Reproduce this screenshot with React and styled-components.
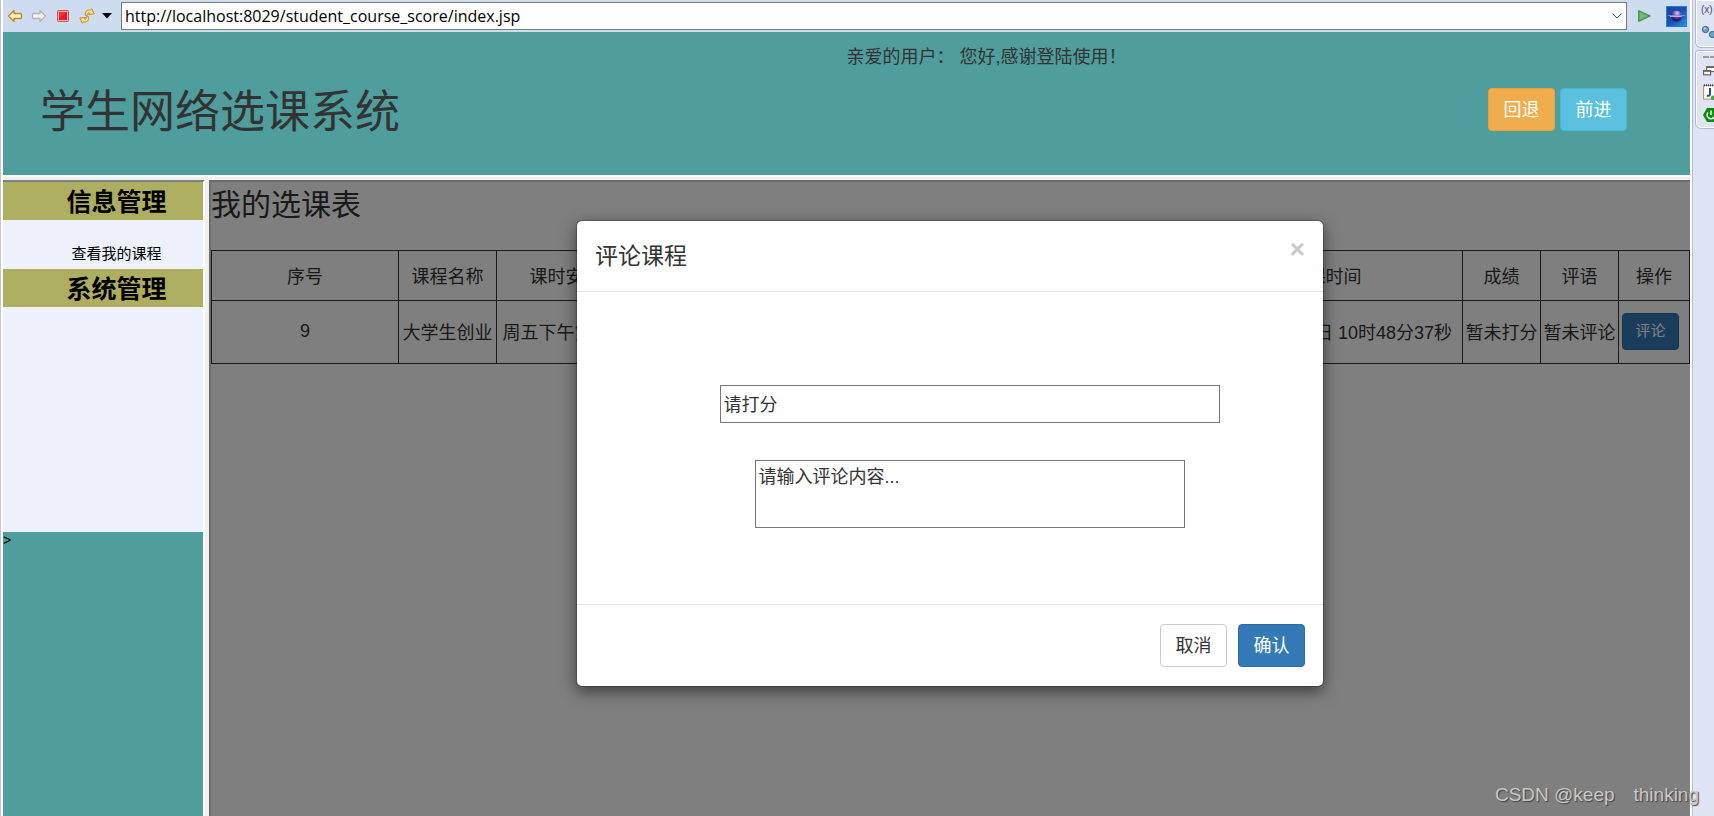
import React, { useState } from "react";
import styled, { createGlobalStyle } from "styled-components";

const columns = [
     { title: "序号", width: "187px" },
     { title: "课程名称", width: "98px" },
     { title: "课时安排", width: "138px" },
     { title: "任课教师" },
     { title: "选课时间", width: "274px" },
     { title: "成绩", width: "78px" },
     { title: "评语", width: "78px" },
     { title: "操作", width: "71px" },
];

const courses = [
     {
          id: 9,
          name: "大学生创业",
          schedule: "周五下午第三节",
          teacher: "",
          time: "2020年12月31日 10时48分37秒",
          score: "暂未打分",
          comment: "暂未评论",
     },
];

const ArrowIcon = ({ fill, stroke, flip }) => (
     <svg width="16" height="14" viewBox="0 0 16 14" aria-hidden="true">
          <path
               d={
                    flip
                         ? "M14.5 7 9 1.5V4.5H2.5Q1.5 4.5 1.5 5.5V8.5Q1.5 9.5 2.5 9.5H9V12.5Z"
                         : "M1.5 7 7 1.5V4.5H13.5Q14.5 4.5 14.5 5.5V8.5Q14.5 9.5 13.5 9.5H7V12.5Z"
               }
               fill={fill}
               stroke={stroke}
               strokeWidth="1.3"
               strokeLinejoin="round"
          />
     </svg>
);

const StopIcon = () => (
     <svg width="12" height="12" viewBox="0 0 12 12" aria-hidden="true">
          <rect x=".5" y=".5" width="11" height="11" rx="1" fill="#f3a9ab" stroke="#cf5358" />
          <rect x="2" y="2" width="8" height="8" fill="#de1f27" />
          <path d="M2 2h8l-8 6z" fill="#e5393e" />
     </svg>
);

const RefreshIcon = () => (
     <svg width="16" height="16" viewBox="0 0 16 16" aria-hidden="true">
          <g fill="#fbe08a" stroke="#c58a2c" strokeLinejoin="round">
               <path d="M6.5 7.5C5.6 4 7.8 1.2 11.4 2.2L12.8.8 15.2 6 9.6 6.4 10.6 5C9 4.4 8.4 5.4 9 7Z" />
               <path d="M9.5 8.5C10.4 12 8.2 14.8 4.6 13.8L3.2 15.2.8 10 6.4 9.6 5.4 11C7 11.6 7.6 10.6 7 9Z" />
          </g>
     </svg>
);

const CaretIcon = () => (
     <svg width="10" height="6" viewBox="0 0 10 6" aria-hidden="true">
          <path d="M0 0H10L5 5.5Z" fill="#000" />
     </svg>
);

const ChevronIcon = () => (
     <svg width="10" height="6" viewBox="0 0 10 6" aria-hidden="true">
          <path d="M.5.5 5 5 9.5.5" fill="none" stroke="#444" />
     </svg>
);

const PlayIcon = () => (
     <svg width="13" height="12" viewBox="0 0 13 12" aria-hidden="true">
          <path d="M.8.8V11.2L12 6Z" fill="#6cc06f" stroke="#2f8a45" strokeWidth="1.2" strokeLinejoin="round" />
     </svg>
);

const GlobeIcon = () => (
     <svg width="21" height="21" viewBox="0 0 21 21" aria-hidden="true">
          <defs>
               <linearGradient id="globeBack" x1="0" y1="0" x2="1" y2="1">
                    <stop offset="0" stopColor="#14469c" />
                    <stop offset=".5" stopColor="#1850b4" />
                    <stop offset="1" stopColor="#2f92e8" />
               </linearGradient>
               <radialGradient id="globeBall" cx=".55" cy=".25" r=".75">
                    <stop offset="0" stopColor="#e3c8f2" />
                    <stop offset=".35" stopColor="#8a62b8" />
                    <stop offset=".7" stopColor="#3d2278" />
                    <stop offset="1" stopColor="#1d1250" />
               </radialGradient>
          </defs>
          <rect width="21" height="21" fill="url(#globeBack)" />
          <rect x=".5" y=".5" width="20" height="20" fill="none" stroke="#2c7ad2" />
          <circle cx="10.5" cy="10" r="5.6" fill="url(#globeBall)" />
          <path d="M2 9.5h17" stroke="#7fa0e0" strokeWidth=".8" />
          <path d="M4 10.5h12" stroke="#d5c0f0" strokeWidth=".8" />
     </svg>
);

const BreakpointIcon = () => (
     <svg width="18" height="14" viewBox="0 0 18 14" aria-hidden="true">
          <g fill="#6fa3c9" stroke="#2c5d86">
               <circle cx="4.5" cy="4.5" r="3.1" />
               <circle cx="11.5" cy="9.5" r="3.1" />
          </g>
          <circle cx="3.6" cy="3.6" r="1" fill="#cfe3f2" />
     </svg>
);

const RestoreIcon = () => (
     <svg width="12" height="10" viewBox="0 0 12 10" aria-hidden="true">
          <g fill="#fff" stroke="#6a625c" strokeWidth="1.2">
               <rect x="3.6" y="1" width="8" height="4.5" />
               <rect x=".6" y="4.6" width="7" height="4.2" />
          </g>
          <path d="M3 1.2h9M0 4.8h8" stroke="#6a625c" strokeWidth="1.8" />
     </svg>
);

const JUnitIcon = () => (
     <svg width="14" height="16" viewBox="0 0 14 16" aria-hidden="true">
          <rect x=".6" y="1.6" width="12" height="13.5" fill="#fff" stroke="#b98d3c" />
          <path d="M1 1.2h12" stroke="#30415f" strokeWidth="2" strokeDasharray="1 1" />
          <path d="M7 4v6.2q0 2-3.2 1.6" fill="none" stroke="#274f8c" strokeWidth="2" />
          <path d="M8 12.5 14 10v6H8z" fill="#4da64d" />
     </svg>
);

const PowerIcon = () => (
     <svg width="16" height="14" viewBox="0 0 16 14" aria-hidden="true">
          <path d="M4 0h8l4 7-4 7H4L0 7Z" fill="#0a8a0a" />
          <path d="M5 4.5a3.8 3.8 0 1 0 6 0M8 2.5V7" fill="none" stroke="#fff" strokeWidth="1.4" />
     </svg>
);

const App = () => {
     const [url, setUrl] = useState("http://localhost:8029/student_course_score/index.jsp");
     const [score, setScore] = useState("请打分");
     const [comment, setComment] = useState("请输入评论内容...");
     //评论弹窗
     const [open, setOpen] = useState(true);

     return (
          <Window>
               <GlobalStyle />
               <Browser>
                    <Toolbar>
                         <ToolGroup>
                              <ToolButton aria-label="后退"><ArrowIcon fill="#fdf0b8" stroke="#c48a1e" /></ToolButton>
                              <ToolButton aria-label="前进"><ArrowIcon flip fill="#f1f1f1" stroke="#b4b4b8" /></ToolButton>
                              <ToolButton aria-label="停止"><StopIcon /></ToolButton>
                              <ToolButton aria-label="刷新"><RefreshIcon /></ToolButton>
                         </ToolGroup>
                         <MenuButton aria-label="更多"><CaretIcon /></MenuButton>
                         <AddressBox>
                              <input aria-label="地址" value={url} onChange={(e) => setUrl(e.target.value)} />
                              <HistoryButton aria-label="历史"><ChevronIcon /></HistoryButton>
                         </AddressBox>
                         <EndTools>
                              <ToolButton aria-label="转到"><PlayIcon /></ToolButton>
                              <ToolButton aria-label="浏览器"><GlobeIcon /></ToolButton>
                         </EndTools>
                    </Toolbar>

                    <Header>
                         <Greeting>亲爱的用户： 您好,感谢登陆使用！</Greeting>
                         <HeaderRow>
                              <h1>学生网络选课系统</h1>
                              <HeaderButtons>
                                   <Button $kind="warning">回退</Button>
                                   <Button $kind="info">前进</Button>
                              </HeaderButtons>
                         </HeaderRow>
                    </Header>

                    <Frames>
                         <Sidebar>
                              <Menu>
                                   <h2>信息管理</h2>
                                   <a href="#courses">查看我的课程</a>
                                   <h2>系统管理</h2>
                              </Menu>
                              <Stray>&gt;</Stray>
                         </Sidebar>
                         <Main>
                              <h2>我的选课表</h2>
                              <CourseTable>
                                   <colgroup>
                                        {columns.map((col) => (
                                             <Col key={col.title} $width={col.width} />
                                        ))}
                                   </colgroup>
                                   <thead>
                                        <tr>
                                             {columns.map((col) => (
                                                  <th key={col.title}>{col.title}</th>
                                             ))}
                                        </tr>
                                   </thead>
                                   <tbody>
                                        {courses.map((course) => (
                                             <tr key={course.id}>
                                                  <td>{course.id}</td>
                                                  <td>{course.name}</td>
                                                  <td>{course.schedule}</td>
                                                  <td>{course.teacher}</td>
                                                  <td>{course.time}</td>
                                                  <td>{course.score}</td>
                                                  <td>{course.comment}</td>
                                                  <ActionCell>
                                                       <Button $kind="primary" $small onClick={() => setOpen(true)}>
                                                            评论
                                                       </Button>
                                                  </ActionCell>
                                             </tr>
                                        ))}
                                   </tbody>
                              </CourseTable>

                              {open && (
                                   <Backdrop>
                                        <Modal role="dialog" aria-labelledby="modal-title">
                                             <ModalHeader>
                                                  <h4 id="modal-title">评论课程</h4>
                                                  <CloseButton aria-label="关闭" onClick={() => setOpen(false)}>×</CloseButton>
                                             </ModalHeader>
                                             <ModalBody>
                                                  <ScoreInput
                                                       aria-label="打分"
                                                       value={score}
                                                       onChange={(e) => setScore(e.target.value)}
                                                  />
                                                  <CommentInput
                                                       aria-label="评论内容"
                                                       value={comment}
                                                       onChange={(e) => setComment(e.target.value)}
                                                  />
                                             </ModalBody>
                                             <ModalFooter>
                                                  <Button $kind="default" onClick={() => setOpen(false)}>取消</Button>
                                                  <Button $kind="primary" onClick={() => setOpen(false)}>确认</Button>
                                             </ModalFooter>
                                        </Modal>
                                   </Backdrop>
                              )}
                         </Main>
                    </Frames>
               </Browser>

               <Rail>
                    <RailCard $first>
                         <span>(x)</span>
                         <BreakpointIcon />
                    </RailCard>
                    <RailCard>
                         <Grip />
                         <RestoreIcon />
                         <JUnitIcon />
                         <PowerIcon />
                    </RailCard>
               </Rail>
               <Watermark>CSDN @keep　thinking</Watermark>
          </Window>
     );
};

export default App;

const GlobalStyle = createGlobalStyle`
     * {
          box-sizing: border-box;
     }
     body {
          margin: 0;
          overflow: hidden;
          color: #333;
          font-family: "Liberation Sans", "Noto Sans CJK SC", sans-serif;
          font-size: 18px;
     }
     h1, h2, h4 {
          margin: 0;
          font-weight: 400;
     }
     button, input, textarea {
          font-family: inherit;
          color: inherit;
     }
     svg {
          display: block;
          flex: none;
     }
`;

const Window = styled.div`
     display: flex;
     height: 100vh;
     background-color: #fff;
     position: relative;
     overflow: hidden;
     border-left: 1px solid #c4c4c4;
`;

const Browser = styled.div`
     flex: 1;
     min-width: 0;
     margin: 0 2px;
     display: flex;
     flex-direction: column;
`;

const Toolbar = styled.div`
     height: 32px;
     background-color: #cddcee;
     display: flex;
     align-items: center;
`;

const ToolGroup = styled.div`
     display: flex;
`;

const ToolButton = styled.button`
     width: 24px;
     height: 24px;
     padding: 0;
     border: none;
     background: none;
     display: flex;
     align-items: center;
     justify-content: center;
`;

const MenuButton = styled(ToolButton)`
     width: 16px;
     margin-right: 6px;
`;

const HistoryButton = styled(ToolButton)`
     width: 18px;
`;

const AddressBox = styled.div`
     flex: 1;
     height: 28px;
     background-color: #fff;
     border: 1px solid #7a7a7a;
     display: flex;
     align-items: center;
     input {
          flex: 1;
          min-width: 0;
          border: none;
          outline: none;
          background: none;
          padding: 0 3px;
          color: #000;
          font-family: "Open Sans", sans-serif;
          font-size: 16px;
          line-height: 24px;
     }
`;

const EndTools = styled.div`
     display: flex;
     gap: 8px;
     padding: 0 2px 0 5px;
`;

const Header = styled.header`
     height: 143px;
     background-color: #509d9d;
     padding: 11px 63px 0 37px;
`;

const Greeting = styled.p`
     margin: 0;
     padding-left: calc(50% + 13px);
     line-height: 28px;
     white-space: nowrap;
`;

const HeaderRow = styled.div`
     display: flex;
     align-items: flex-start;
     justify-content: space-between;
     padding-top: 12px;
     h1 {
          font-size: 45px;
          line-height: 60px;
     }
`;

const HeaderButtons = styled.div`
     display: flex;
     gap: 5px;
     padding-top: 5px;
`;

const kinds = {
     default: { bg: "#fff", line: "#ccc", text: "#333" },
     primary: { bg: "#337ab7", line: "#2e6da4", text: "#fff" },
     info: { bg: "#5bc0de", line: "#46b8da", text: "#fff" },
     warning: { bg: "#f0ad4e", line: "#eea236", text: "#fff" },
};

const Button = styled.button`
     height: ${({ $small }) => ($small ? "37px" : "43px")};
     width: ${({ $small }) => ($small ? "57px" : "67px")};
     padding: 0;
     font-size: ${({ $small }) => ($small ? "15px" : "18px")};
     line-height: 24px;
     color: ${({ $kind }) => kinds[$kind].text};
     background-color: ${({ $kind }) => kinds[$kind].bg};
     border: 1px solid ${({ $kind }) => kinds[$kind].line};
     border-radius: 4px;
     cursor: pointer;
`;

const Frames = styled.div`
     flex: 1;
     min-height: 0;
     display: flex;
     gap: 4px;
     background-color: #f0f0f0;
     border-top: 2px solid #fff;
     padding-top: 3px;
`;

const Sidebar = styled.aside`
     width: 202px;
     display: flex;
     flex-direction: column;
     background-color: #509d9d;
     border-top: 2px solid #808080;
     border-right: 2px solid #fff;
`;

const Menu = styled.nav`
     height: 350px;
     background-color: #edf1fb;
     display: flex;
     flex-direction: column;
     text-align: center;
     h2 {
          background-color: #aeae60;
          color: #000;
          font-size: 25px;
          font-weight: 700;
          line-height: 36px;
          padding: 2px 0 0 27px;
     }
     a {
          color: #000;
          font-size: 15px;
          line-height: 30px;
          padding: 19px 0 0 27px;
          text-decoration: none;
     }
`;

const Stray = styled.span`
     color: #000;
     font-size: 14px;
     line-height: 16px;
`;

const Main = styled.main`
     flex: 1;
     min-width: 0;
     position: relative;
     background-color: #fff;
     border-top: 2px solid #6c6c6c;
     border-left: 2px solid #6c6c6c;
     h2 {
          font-size: 30px;
          line-height: 46px;
          margin-bottom: 22px;
     }
`;

const CourseTable = styled.table`
     width: 100%;
     table-layout: fixed;
     border-collapse: collapse;
     text-align: center;
     th, td {
          border: 1px solid #333;
          padding: 0 0 2px;
          font-weight: 400;
          white-space: nowrap;
     }
     th {
          height: 50px;
     }
     td {
          height: 63px;
     }
`;

const Col = styled.col`
     width: ${({ $width }) => $width || "auto"};
`;

const ActionCell = styled.td`
     text-align: left;
     button {
          margin-left: 3px;
     }
`;

const Backdrop = styled.div`
     position: absolute;
     inset: 0;
     background-color: rgba(0, 0, 0, 0.5);
     display: flex;
     align-items: flex-start;
     justify-content: center;
     padding: 38px 1px 0 0;
`;

const Modal = styled.div`
     width: 748px;
     background-color: #fff;
     background-clip: padding-box;
     border: 1px solid rgba(0, 0, 0, 0.2);
     border-radius: 6px;
     box-shadow: 0 5px 15px rgba(0, 0, 0, 0.5);
`;

const ModalHeader = styled.div`
     display: flex;
     align-items: flex-start;
     justify-content: space-between;
     padding: 19px 18px 18px;
     border-bottom: 1px solid #e5e5e5;
     h4 {
          font-size: 23px;
          line-height: 33px;
     }
`;

const CloseButton = styled.button`
     border: none;
     background: none;
     padding: 0;
     font-size: 26px;
     font-weight: 700;
     line-height: 18px;
     color: #c8c8c8;
     cursor: pointer;
`;

const ModalBody = styled.div`
     display: flex;
     flex-direction: column;
     align-items: center;
     gap: 37px;
     padding: 93px 19px 76px 58px;
`;

const ScoreInput = styled.input`
     width: 500px;
     height: 38px;
     border: 1px solid #767676;
     padding: 0 3px 2px;
     font-size: 18px;
`;

const CommentInput = styled.textarea`
     width: 430px;
     height: 68px;
     border: 1px solid #767676;
     padding: 3px;
     font-size: 18px;
     line-height: 26px;
     resize: none;
`;

const ModalFooter = styled.div`
     display: flex;
     justify-content: flex-end;
     gap: 11px;
     padding: 19px 18px;
     border-top: 1px solid #e5e5e5;
`;

const Rail = styled.aside`
     width: 22px;
     background-color: #dfe4f5;
     border-left: 1px solid #b9bcc8;
     padding-left: 2px;
     overflow: hidden;
`;

const RailCard = styled.div`
     width: 40px;
     height: ${({ $first }) => ($first ? "48px" : "79px")};
     margin-bottom: 2px;
     padding: ${({ $first }) => ($first ? "3px 0 0 5px" : "5px 0 0 7px")};
     border: 1px solid #b3b8cc;
     border-top-width: ${({ $first }) => ($first ? "0" : "1px")};
     border-radius: ${({ $first }) => ($first ? "0 0 0 6px" : "3px 0 0 6px")};
     box-shadow: inset 1px 1px #fff, inset 0 -1px #fff;
     display: flex;
     flex-direction: column;
     gap: 8px;
     span {
          font-size: 10px;
          line-height: 14px;
          color: #3f4c6b;
     }
`;

const Grip = styled.div`
     width: 20px;
     border-top: 2px dashed #a09a90;
`;

const Watermark = styled.div`
     position: absolute;
     right: 15px;
     bottom: 8px;
     font-size: 19px;
     line-height: 26px;
     color: #c9c9c9;
     text-shadow: 1px 1px 1px #444;
     white-space: nowrap;
     pointer-events: none;
`;
